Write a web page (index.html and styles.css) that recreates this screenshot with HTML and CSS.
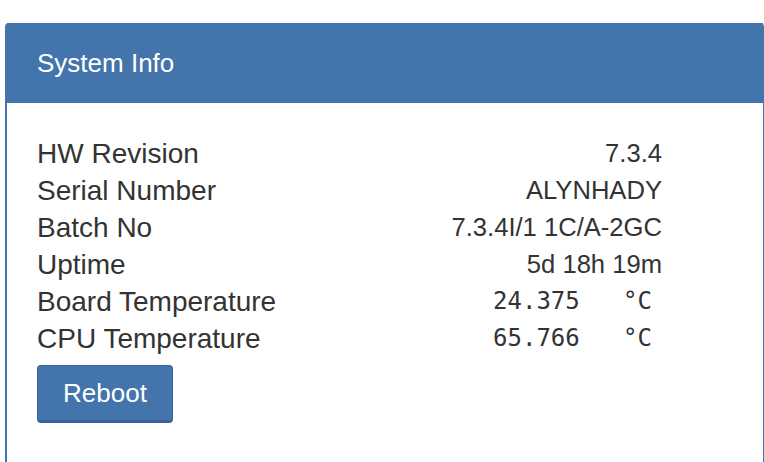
FILE: index.html
```html
<!DOCTYPE html>
<html>
<head>
    <title>System Info</title>
    <link rel="stylesheet" href="styles.css">
</head>
<body>
    <div class="panel">
        <div class="panel-heading">System Info</div>
        <div class="panel-body">
            <table class="info">
                <tr><td class="label">HW Revision</td><td class="value">7.3.4</td></tr>
                <tr><td class="label">Serial Number</td><td class="value">ALYNHADY</td></tr>
                <tr><td class="label">Batch No</td><td class="value">7.3.4I/1 1C/A-2GC</td></tr>
                <tr><td class="label">Uptime</td><td class="value">5d 18h 19m</td></tr>
                <tr><td class="label">Board Temperature</td><td class="value temp">24.375   °C</td></tr>
                <tr><td class="label">CPU Temperature</td><td class="value temp">65.766   °C</td></tr>
            </table>
            <button class="btn">Reboot</button>
        </div>
    </div>
</body>
</html>
```

FILE: styles.css
```css
body {
    margin: 0;
    font-family: Arial, "Liberation Sans", Helvetica, sans-serif;
    color: #333;
    overflow: hidden;
}
.panel {
    margin: 23px 0 0 5px;
    height: 460px;
    border: 1px solid #4374ab;
    border-left-width: 2px;
    border-radius: 4px 4px 0 0;
}
.panel-heading {
    background-color: #4374ab;
    color: white;
    font-size: 26px;
    height: 80px;
    line-height: 80px;
    padding-left: 30px;
    margin-top: -1px;
}
.panel-body {
    padding: 32px 30px;
}
.info {
    border-collapse: collapse;
    width: 625px;
}
.info td {
    padding: 0;
    height: 37px;
    line-height: 37px;
}
.label {
    font-size: 28px;
}
.value {
    font-size: 25.6px;
    text-align: right;
}
.temp {
    font-family: "DejaVu Sans Mono", monospace;
    font-size: 24px;
    white-space: pre;
    padding-right: 10px !important;
}
.btn {
    margin-top: 8px;
    width: 136px;
    height: 58px;
    font-family: Arial, "Liberation Sans", Helvetica, sans-serif;
    font-size: 26px;
    color: white;
    background-color: #4374ab;
    border: 1px solid #3a669a;
    border-bottom: 3px solid #3a6496;
    border-radius: 4px;
    padding: 0;
}
```
